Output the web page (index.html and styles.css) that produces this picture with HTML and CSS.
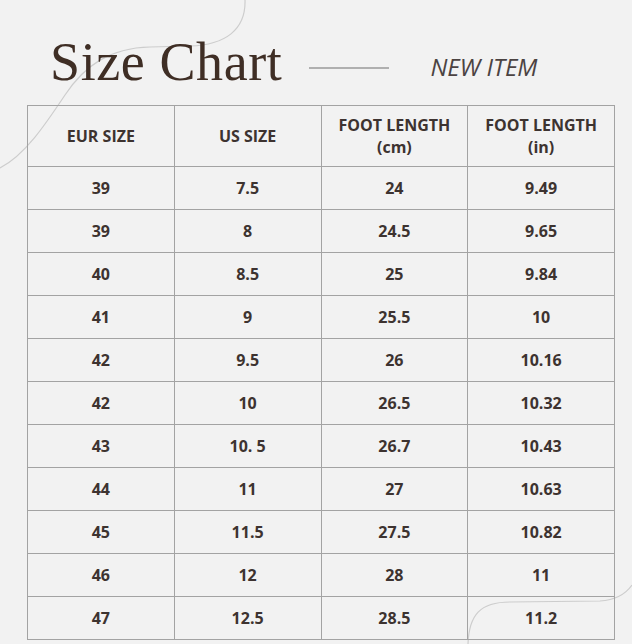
FILE: index.html
```html
<!DOCTYPE html>
<html>
<head>
<meta charset="utf-8">
<link rel="stylesheet" href="styles.css">
</head>
<body>
<svg class="deco" width="632" height="644" viewBox="0 0 632 644" aria-hidden="true">
  <path d="M245,0 C246,30 225,45 190,46 L150,47 C110,48 85,65 65,95 C45,125 25,155 0,168" />
  <path d="M468,644 C469,615 480,602 510,602 L600,601 C615,600 625,595 632,585" />
</svg>
<div class="page">
  <header class="head">
    <h1 class="title">Size Chart</h1>
    <span class="rule"></span>
    <span class="tag">NEW ITEM</span>
  </header>
  <table class="chart">
    <thead>
      <tr>
        <th>EUR SIZE</th>
        <th>US SIZE</th>
        <th>FOOT LENGTH<br>(cm)</th>
        <th>FOOT LENGTH<br>(in)</th>
      </tr>
    </thead>
    <tbody>
      <tr><td>39</td><td>7.5</td><td>24</td><td>9.49</td></tr>
      <tr><td>39</td><td>8</td><td>24.5</td><td>9.65</td></tr>
      <tr><td>40</td><td>8.5</td><td>25</td><td>9.84</td></tr>
      <tr><td>41</td><td>9</td><td>25.5</td><td>10</td></tr>
      <tr><td>42</td><td>9.5</td><td>26</td><td>10.16</td></tr>
      <tr><td>42</td><td>10</td><td>26.5</td><td>10.32</td></tr>
      <tr><td>43</td><td>10. 5</td><td>26.7</td><td>10.43</td></tr>
      <tr><td>44</td><td>11</td><td>27</td><td>10.63</td></tr>
      <tr><td>45</td><td>11.5</td><td>27.5</td><td>10.82</td></tr>
      <tr><td>46</td><td>12</td><td>28</td><td>11</td></tr>
      <tr><td>47</td><td>12.5</td><td>28.5</td><td>11.2</td></tr>
    </tbody>
  </table>
</div>
</body>
</html>
```
FILE: styles.css
```css
html, body {
  margin: 0;
  padding: 0;
  background: #f2f2f2;
}
body {
  width: 632px;
  height: 644px;
  overflow: hidden;
  position: relative;
}
.deco {
  position: absolute;
  left: 0;
  top: 0;
  fill: none;
  stroke: #cdcdcd;
  stroke-width: 1.2;
}
.page {
  position: relative;
  padding: 35px 0 0 27px;
}
.head {
  display: flex;
  align-items: flex-start;
  height: 70px;
  padding-left: 23px;
}
.title {
  margin: 0;
  font-family: "Liberation Serif", "Times New Roman", serif;
  font-weight: 400;
  font-size: 54px;
  line-height: 54px;
  letter-spacing: 0.6px;
  color: #3f2e25;
}
.rule {
  width: 80px;
  height: 2px;
  background: #b0b0b0;
  margin: 32px 0 0 27px;
}
.tag {
  margin: 17px 0 0 41px;
  font-family: "Open Sans", sans-serif;
  font-style: italic;
  font-size: 24px;
  line-height: 30px;
  color: #4b4342;
}
.chart {
  border-collapse: collapse;
  width: 588px;
  table-layout: fixed;
  font-family: "Open Sans", sans-serif;
  font-weight: 700;
  font-size: 16px;
  color: #3d3330;
}
.chart th, .chart td {
  border: 1px solid #a3a3a3;
  text-align: center;
  padding: 0;
}
.chart th {
  height: 60px;
  font-weight: 700;
  line-height: 22px;
}
.chart td {
  height: 42px;
  line-height: 20px;
}
```
